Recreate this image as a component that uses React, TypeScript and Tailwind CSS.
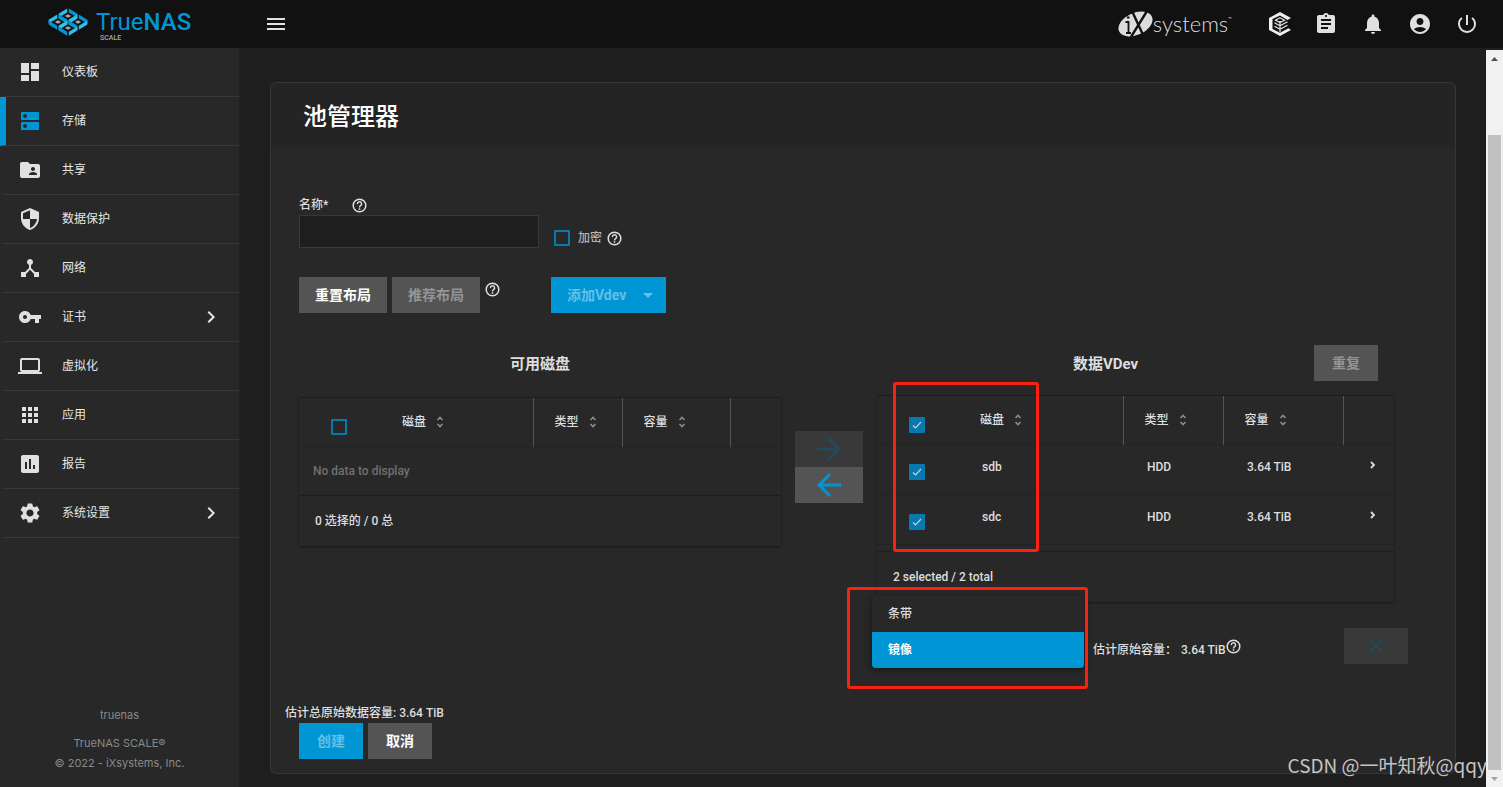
import type { ReactNode } from 'react';
import type { IconType } from 'react-icons';
import {
  MdAccountCircle,
  MdApps,
  MdArrowBack,
  MdArrowDropDown,
  MdArrowForward,
  MdAssessment,
  MdAssignment,
  MdChevronRight,
  MdClose,
  MdDashboard,
  MdDeviceHub,
  MdDns,
  MdFolderShared,
  MdLaptop,
  MdMenu,
  MdNotifications,
  MdPowerSettingsNew,
  MdSecurity,
  MdSettings,
  MdVpnKey,
} from 'react-icons/md';

interface NavItem {
  label: string;
  icon: IconType;
  active?: boolean;
  expandable?: boolean;
}

const navItems: NavItem[] = [
  { label: '仪表板', icon: MdDashboard },
  { label: '存储', icon: MdDns, active: true },
  { label: '共享', icon: MdFolderShared },
  { label: '数据保护', icon: MdSecurity },
  { label: '网络', icon: MdDeviceHub },
  { label: '证书', icon: MdVpnKey, expandable: true },
  { label: '虚拟化', icon: MdLaptop },
  { label: '应用', icon: MdApps },
  { label: '报告', icon: MdAssessment },
  { label: '系统设置', icon: MdSettings, expandable: true },
];

const disks = [
  { name: 'sdb', type: 'HDD', size: '3.64 TiB' },
  { name: 'sdc', type: 'HDD', size: '3.64 TiB' },
];

// four isometric cells that share their inner walls
function TrueNasMark() {
  const cells = [
    [20, 8],
    [10, 14],
    [30, 14],
    [20, 20],
  ];
  return (
    <svg viewBox="0 0 40 28" className="h-7 w-10" aria-hidden="true">
      {cells.map(([x, y]) => (
        <g key={`${x}-${y}`} transform={`translate(${x} ${y})`}>
          <path d="M-9.4 -2.2 L-.8 -7.6 V-3.6 L-9.4 1.6 Z" fill="#31beec" />
          <path d="M9.4 -2.2 L.8 -7.6 V-3.6 L9.4 1.6 Z" fill="#0095d5" />
          <path d="M-9.4 -1.6 L-.8 3.8 V7.8 L-9.4 2.4 Z" fill="#0095d5" />
          <path d="M9.4 -1.6 L.8 3.8 V7.8 L9.4 2.4 Z" fill="#31beec" />
        </g>
      ))}
      {cells.map(([x, y]) => (
        <path
          key={`${x}-${y}`}
          transform={`translate(${x} ${y})`}
          d="M0 -2 L3.6 0 L0 2 L-3.6 0 Z"
          fill="#aeadae"
          stroke="#111"
          strokeWidth="0.5"
        />
      ))}
    </svg>
  );
}

function IxMark() {
  return (
    <svg viewBox="0 0 35 26" className="h-[26px] w-[35px]" aria-hidden="true">
      <ellipse cx="17.5" cy="13" rx="18" ry="11" transform="rotate(-24 17.5 13)" fill="#dcdcdc" />
      <path d="M14 0 L26 26 M29 0 L13 26" stroke="#111" strokeWidth="2.4" />
      <path d="M9 6.5 H11.5 M7.5 11 H10.5 V22 M8 22 H13" stroke="#111" strokeWidth="1.8" fill="none" />
    </svg>
  );
}

function TrueCommandIcon() {
  return (
    <svg viewBox="0 0 22 24" className="h-6 w-[22px]" aria-hidden="true">
      <path
        d="M22 6 L11 0 L0 6 V18 L11 24 L22 18 L19.5 16.3 L11 20.8 L3.5 17 V7 L11 3.6 L18.5 8 Z"
        fill="#f0f0f0"
      />
      <path
        d="M11 5.8 L15.5 8.2 L11 10.6 L6.5 8.2 Z M11 9 V20 M5.5 10.8 L11 13.8 L18.5 9.8 M5.5 14.2 L11 17.2 L18.5 13.2"
        stroke="#e0e0e0"
        strokeWidth="1.3"
        fill="none"
      />
    </svg>
  );
}

function SortIcon() {
  return (
    <svg viewBox="0 0 8 12" className="h-3 w-2" aria-hidden="true">
      <path d="M1.5 4 L4 1.5 L6.5 4 M1.5 8 L4 10.5 L6.5 8" stroke="#8c8c8c" strokeWidth="1.6" fill="none" />
    </svg>
  );
}

function HelpButton({ label }: { label: string }) {
  return (
    <button type="button" aria-label={label} className="block text-[#e0e0e0]">
      <svg viewBox="0 0 17 17" className="size-[17px]" fill="none" stroke="currentColor" aria-hidden="true">
        <circle cx="8.5" cy="8.5" r="6.3" strokeWidth="1.5" />
        <path d="M6.4 7.1 A2.1 2.1 0 1 1 9.6 8.6 C8.8 9.1 8.5 9.5 8.5 10.4" strokeWidth="1.4" />
        <path d="M8.5 11.3 V12.8" strokeWidth="1.5" />
      </svg>
    </button>
  );
}

interface CheckboxProps {
  label: string;
  id?: string;
  checked?: boolean;
}

function Checkbox({ label, id, checked = false }: CheckboxProps) {
  return (
    <span className="grid size-4">
      <input
        id={id}
        type="checkbox"
        aria-label={label}
        defaultChecked={checked}
        className="peer col-start-1 row-start-1 size-4 appearance-none rounded-[1px] border-2 border-[#0779ae] checked:bg-[#0779ae]"
      />
      <svg
        viewBox="0 0 16 16"
        className="pointer-events-none col-start-1 row-start-1 hidden size-4 peer-checked:block"
        aria-hidden="true"
      >
        <path d="M4 8.5 L6.5 11 L12 5" stroke="#c4d3db" strokeWidth="1.2" fill="none" />
      </svg>
    </span>
  );
}

function HeaderCell({ children }: { children: ReactNode }) {
  return (
    <th scope="col" className="border-r border-[#555] pl-[21px] text-left font-medium">
      <button type="button" className="flex items-center gap-2.5">
        {children}
        <SortIcon />
      </button>
    </th>
  );
}

function DiskHeader({ checked }: { checked?: boolean }) {
  return (
    <thead>
      <tr className="h-12">
        <th scope="col" className="pt-2.5 pl-8">
          <Checkbox label="全选" checked={checked} />
        </th>
        <HeaderCell>磁盘</HeaderCell>
        <HeaderCell>类型</HeaderCell>
        <HeaderCell>容量</HeaderCell>
        <th aria-label="详情" />
      </tr>
    </thead>
  );
}

function TopBar() {
  return (
    <header className="flex h-12 shrink-0 items-center bg-[#111] text-[#e0e0e0]">
      <a href="#" aria-label="TrueNAS SCALE" className="flex w-60 items-start gap-2 pl-12">
        <TrueNasMark />
        <span className="flex flex-col text-[#0095d5]">
          <span className="text-2xl leading-7 font-normal">
            True<span className="font-medium">NAS</span>
          </span>
          <span className="pl-1 text-[7px] leading-1 font-medium text-[#aaa]">SCALE</span>
        </span>
      </a>
      <button type="button" aria-label="菜单" className="ml-6">
        <MdMenu size={24} />
      </button>
      <div className="ml-auto flex items-center gap-[23px] pr-6">
        <a href="#" aria-label="iXsystems" className="mr-3.5 flex items-center">
          <IxMark />
          <span className="font-['Lato'] text-[22px] leading-6 font-light text-[#dcdcdc]">systems</span>
          <span className="self-start text-[6px] leading-4">™</span>
        </a>
        <button type="button" aria-label="TrueCommand">
          <TrueCommandIcon />
        </button>
        <button type="button" aria-label="任务">
          <MdAssignment size={24} />
        </button>
        <button type="button" aria-label="通知">
          <MdNotifications size={24} />
        </button>
        <button type="button" aria-label="账户">
          <MdAccountCircle size={24} />
        </button>
        <button type="button" aria-label="电源">
          <MdPowerSettingsNew size={24} />
        </button>
      </div>
    </header>
  );
}

function Sidebar() {
  return (
    <aside className="flex w-60 shrink-0 flex-col justify-between border-r border-[#222] bg-[#282828]">
      <nav>
        {navItems.map(({ label, icon: Icon, active, expandable }) => (
          <a
            key={label}
            href="#"
            className={`flex h-[49px] items-center border-b border-b-[#383838] border-l-6 pr-4 pl-3 text-xs text-[#e6e6e6] ${
              active ? 'border-l-[#0095d5]' : 'border-l-transparent'
            }`}
          >
            <Icon size={24} className={active ? 'text-[#0095d5]' : 'text-[#e0e0e0]'} />
            <span className="ml-5 flex-1">{label}</span>
            {expandable && <MdChevronRight size={24} />}
          </a>
        ))}
      </nav>
      <div className="pb-3.5 text-center font-['Inter'] text-[11px] leading-5 text-[#8a8a8a]">
        <p className="mb-2">truenas</p>
        <p>TrueNAS SCALE®</p>
        <p>© 2022 - iXsystems, Inc.</p>
      </div>
    </aside>
  );
}

function AvailableDisks() {
  return (
    <section>
      <h2 className="flex h-9 items-center justify-center pt-1 text-[15px] font-bold">可用磁盘</h2>
      <div className="mt-4 border-t border-[#1d1d1d] shadow-[0_1px_2px_#181818]">
        <table className="w-full table-fixed">
          <colgroup>
            <col className="w-[82px]" />
            <col />
            <col className="w-[89px]" />
            <col className="w-[108px]" />
            <col className="w-[51px]" />
          </colgroup>
          <DiskHeader />
          <tbody>
            <tr className="h-[49px] border-y border-t-[#222] border-b-[#1d1d1d]">
              <td colSpan={5} className="pl-3.5 text-[#707070]">
                No data to display
              </td>
            </tr>
          </tbody>
        </table>
        <p className="flex h-[50px] items-center pl-4">0 选择的 / 0 总</p>
      </div>
    </section>
  );
}

function DataVdev() {
  return (
    <section>
      <div className="flex h-9 items-center">
        <h2 className="flex-1 pt-1 pl-5 text-center text-[15px] font-bold">数据VDev</h2>
        <button
          type="button"
          disabled
          className="mr-4 h-9 w-16 bg-[#545454] text-sm font-bold text-[#959595]"
        >
          重复
        </button>
      </div>
      <div className="relative mt-3.5 border-t border-[#1d1d1d] shadow-[0_1px_2px_#181818]">
        <table className="w-full table-fixed">
          <colgroup>
            <col className="w-[82px]" />
            <col />
            <col className="w-[100px]" />
            <col className="w-[120px]" />
            <col className="w-[51px]" />
          </colgroup>
          <DiskHeader checked />
          <tbody>
            {disks.map((disk) => (
              <tr key={disk.name} className="h-[50px] border-y border-[#222]">
                <td className="pt-1.5 pl-8">
                  <Checkbox label={disk.name} checked />
                </td>
                <td className="pb-1 pl-[23px]">{disk.name}</td>
                <td className="pb-1 pl-6">{disk.type}</td>
                <td className="pb-1 pl-6">{disk.size}</td>
                <td className="pb-2 pl-[23px]">
                  <button type="button" aria-label={`展开 ${disk.name}`} className="block">
                    <svg viewBox="0 0 14 14" className="size-3.5" aria-hidden="true">
                      <path d="M5 4 L8 7 L5 10" stroke="currentColor" strokeWidth="1.8" fill="none" />
                    </svg>
                  </button>
                </td>
              </tr>
            ))}
          </tbody>
        </table>
        <p className="mt-1.5 flex h-[51px] items-center border-t border-[#1d1d1d] pl-4">2 selected / 2 total</p>
        <div className="pointer-events-none absolute -top-3.5 left-4 h-[170px] w-[146px] rounded-[3px] border-3 border-[#ff1f10]" />
      </div>
      <div className="relative mt-6 -mr-3.5 flex h-10 items-center justify-between pl-[216px]">
        <p className="flex items-center pt-2">
          <span>估计原始容量：</span>
          <span className="ml-1">3.64 TiB</span>
          <span className="mb-1.5">
            <HelpButton label="容量说明" />
          </span>
        </p>
        <button
          type="button"
          aria-label="删除"
          disabled
          className="flex h-9 w-16 items-center justify-center bg-[#393939] text-[#23495b]"
        >
          <MdClose size={24} />
        </button>
        <div
          role="listbox"
          aria-label="布局"
          className="absolute -top-[30px] -left-[5px] flex w-[212px] flex-col overflow-hidden rounded-sm bg-[#282828] shadow-[0_2px_6px_#151515]"
        >
          <button type="button" role="option" aria-selected="false" className="h-9 px-4 text-left">
            条带
          </button>
          <button
            type="button"
            role="option"
            aria-selected="true"
            className="h-9 bg-[#0095d5] px-4 text-left font-bold text-white"
          >
            镜像
          </button>
        </div>
        <div className="pointer-events-none absolute -top-[39px] -left-[30px] h-[102px] w-[241px] rounded-[3px] border-3 border-[#ff1f10]" />
      </div>
    </section>
  );
}

function PoolManager() {
  return (
    <div className="rounded-md border border-[#363636] bg-[#282828]">
      <h1 className="flex h-16 items-center rounded-t-md bg-[#242424] px-8 pt-1 text-2xl font-medium text-white">
        池管理器
      </h1>
      <form className="pt-12 pr-[61px] pb-3.5 pl-7 font-medium" onSubmit={(e) => e.preventDefault()}>
        <div className="flex items-end gap-[15px]">
          <div className="w-60">
            <div className="flex h-5 items-center gap-[23px]">
              <label htmlFor="pool-name">名称*</label>
              <HelpButton label="名称说明" />
            </div>
            <input
              id="pool-name"
              className="block h-[33px] w-full border border-[#383838] bg-[#1e1e1e] px-2 outline-none"
            />
          </div>
          <div className="flex h-5 items-center gap-1">
            <Checkbox id="encryption" label="加密" />
            <label htmlFor="encryption" className="ml-1 text-[#b4b4b4]">
              加密
            </label>
            <HelpButton label="加密说明" />
          </div>
        </div>

        <div className="mt-[29px] flex h-9 text-sm font-bold">
          <button type="button" className="w-22 bg-[#545454] text-white">
            重置布局
          </button>
          <button type="button" disabled className="ml-[5px] w-22 bg-[#545454] text-[#959595]">
            推荐布局
          </button>
          <span className="mt-1 ml-1">
            <HelpButton label="布局说明" />
          </span>
          <button type="button" className="ml-[50px] flex items-center bg-[#0095d5] pr-1.5 pl-4 text-[#66bfe6]">
            添加Vdev
            <MdArrowDropDown size={24} className="ml-2.5" />
          </button>
        </div>

        <div className="mt-8 grid grid-cols-[482fr_68px_517fr] gap-x-3.5">
          <AvailableDisks />
          <div className="mt-[86px] flex flex-col">
            <button
              type="button"
              aria-label="添加到 VDev"
              disabled
              className="flex h-9 items-center justify-center bg-[#393939] text-[#23495b]"
            >
              <MdArrowForward size={36} />
            </button>
            <button
              type="button"
              aria-label="从 VDev 移除"
              className="flex h-9 items-center justify-center bg-[#545454] text-[#0095d5]"
            >
              <MdArrowBack size={36} />
            </button>
          </div>
          <DataVdev />
        </div>

        <p className="mt-[37px] -ml-3.5 leading-5">估计总原始数据容量: 3.64 TiB</p>
        <div className="flex h-9 gap-[5px] text-sm font-bold">
          <button type="submit" disabled className="w-16 bg-[#0095d5] text-[#66bfe6]">
            创建
          </button>
          <button type="button" className="w-16 bg-[#545454] text-white">
            取消
          </button>
        </div>
      </form>
    </div>
  );
}

function ScrollRail() {
  return (
    <div className="mt-0.5 flex w-[17px] shrink-0 flex-col items-center bg-[#f1f1f1]" aria-hidden="true">
      <svg viewBox="0 0 17 17" className="size-[17px]">
        <path d="M5 11 L8.5 7 L12 11 Z" fill="#505050" />
      </svg>
      <div className="mt-17 w-[13px] flex-1 bg-[#c1c1c1]" />
      <svg viewBox="0 0 17 17" className="size-[17px]">
        <path d="M5 7 L8.5 11 L12 7 Z" fill="#a3a3a3" />
      </svg>
    </div>
  );
}

export default function App() {
  return (
    <div className="relative flex h-screen flex-col overflow-hidden bg-[#1e1e1e] font-['Roboto','Noto_Sans_CJK_SC',sans-serif] text-xs text-[#dedede]">
      <TopBar />
      <div className="flex min-h-0 flex-1">
        <Sidebar />
        <main className="min-w-0 flex-1 overflow-hidden px-[30px] pt-[34px]">
          <PoolManager />
        </main>
        <ScrollRail />
      </div>
      <p className="pointer-events-none absolute right-4 bottom-2 font-['Noto_Sans_CJK_SC',sans-serif] text-[19px] leading-7 text-[#c4c4c4]">
        CSDN @一叶知秋@qqy
      </p>
    </div>
  );
}
